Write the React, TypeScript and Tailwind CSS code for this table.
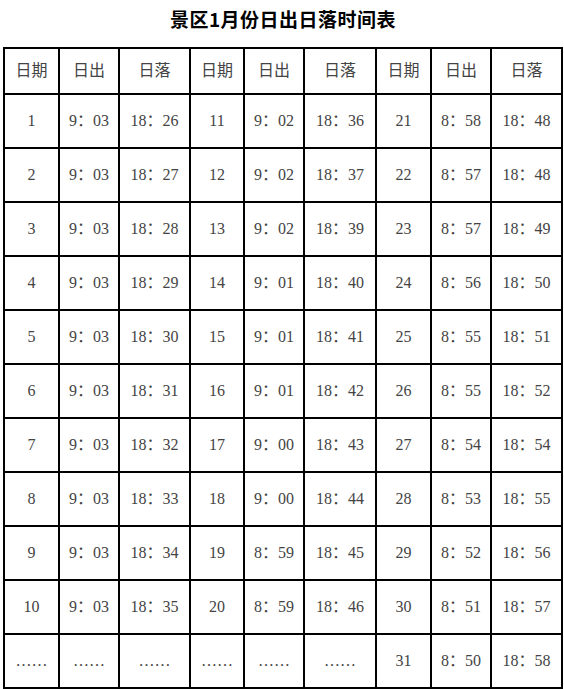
const COLS = ['w-[53px]', 'w-[58px]', 'w-[69px]', 'w-[52px]', 'w-[58px]', 'w-[70px]', 'w-[53px]', 'w-[58px]', 'w-[69px]'];

const HEADERS = ['日期', '日出', '日落', '日期', '日出', '日落', '日期', '日出', '日落'];

// day, sunrise, sunset per block of ten
const ROWS: string[][] = [
  ['1', '9：03', '18：26', '11', '9：02', '18：36', '21', '8：58', '18：48'],
  ['2', '9：03', '18：27', '12', '9：02', '18：37', '22', '8：57', '18：48'],
  ['3', '9：03', '18：28', '13', '9：02', '18：39', '23', '8：57', '18：49'],
  ['4', '9：03', '18：29', '14', '9：01', '18：40', '24', '8：56', '18：50'],
  ['5', '9：03', '18：30', '15', '9：01', '18：41', '25', '8：55', '18：51'],
  ['6', '9：03', '18：31', '16', '9：01', '18：42', '26', '8：55', '18：52'],
  ['7', '9：03', '18：32', '17', '9：00', '18：43', '27', '8：54', '18：54'],
  ['8', '9：03', '18：33', '18', '9：00', '18：44', '28', '8：53', '18：55'],
  ['9', '9：03', '18：34', '19', '8：59', '18：45', '29', '8：52', '18：56'],
  ['10', '9：03', '18：35', '20', '8：59', '18：46', '30', '8：51', '18：57'],
  ['……', '……', '……', '……', '……', '……', '31', '8：50', '18：58'],
];

export default function App() {
  return (
    <div
      className="w-[564px] h-[689px] bg-white overflow-hidden"
      style={{ fontFamily: '"Liberation Serif", "Noto Sans CJK SC", serif' }}
    >
      {/* Title */}
      <div className="h-[47px] pt-[8px] pl-[2px] text-center">
        <h1
          className="text-[19px] leading-[21px] font-bold tracking-[0.5px] text-black"
          style={{ fontFamily: '"Noto Sans CJK SC", sans-serif' }}
        >
          景区1月份日出日落时间表
        </h1>
      </div>

      {/* Table */}
      <div className="ml-[3px] w-[560px] bg-black p-[2px] flex flex-col gap-[2px]">
        <div className="flex gap-[2px]">
          {HEADERS.map((h, i) => (
            <div
              key={i}
              className={`${COLS[i]} h-[44px] bg-white flex items-center justify-center text-[16px] text-[#444]`}
            >
              {h}
            </div>
          ))}
        </div>
        {ROWS.map((row, r) => (
          <div key={r} className="flex gap-[2px]">
            {row.map((cell, i) => (
              <div
                key={i}
                className={`${COLS[i]} h-[52px] bg-white flex items-center justify-center text-[16px] text-[#444]`}
              >
                {cell}
              </div>
            ))}
          </div>
        ))}
      </div>
    </div>
  );
}
